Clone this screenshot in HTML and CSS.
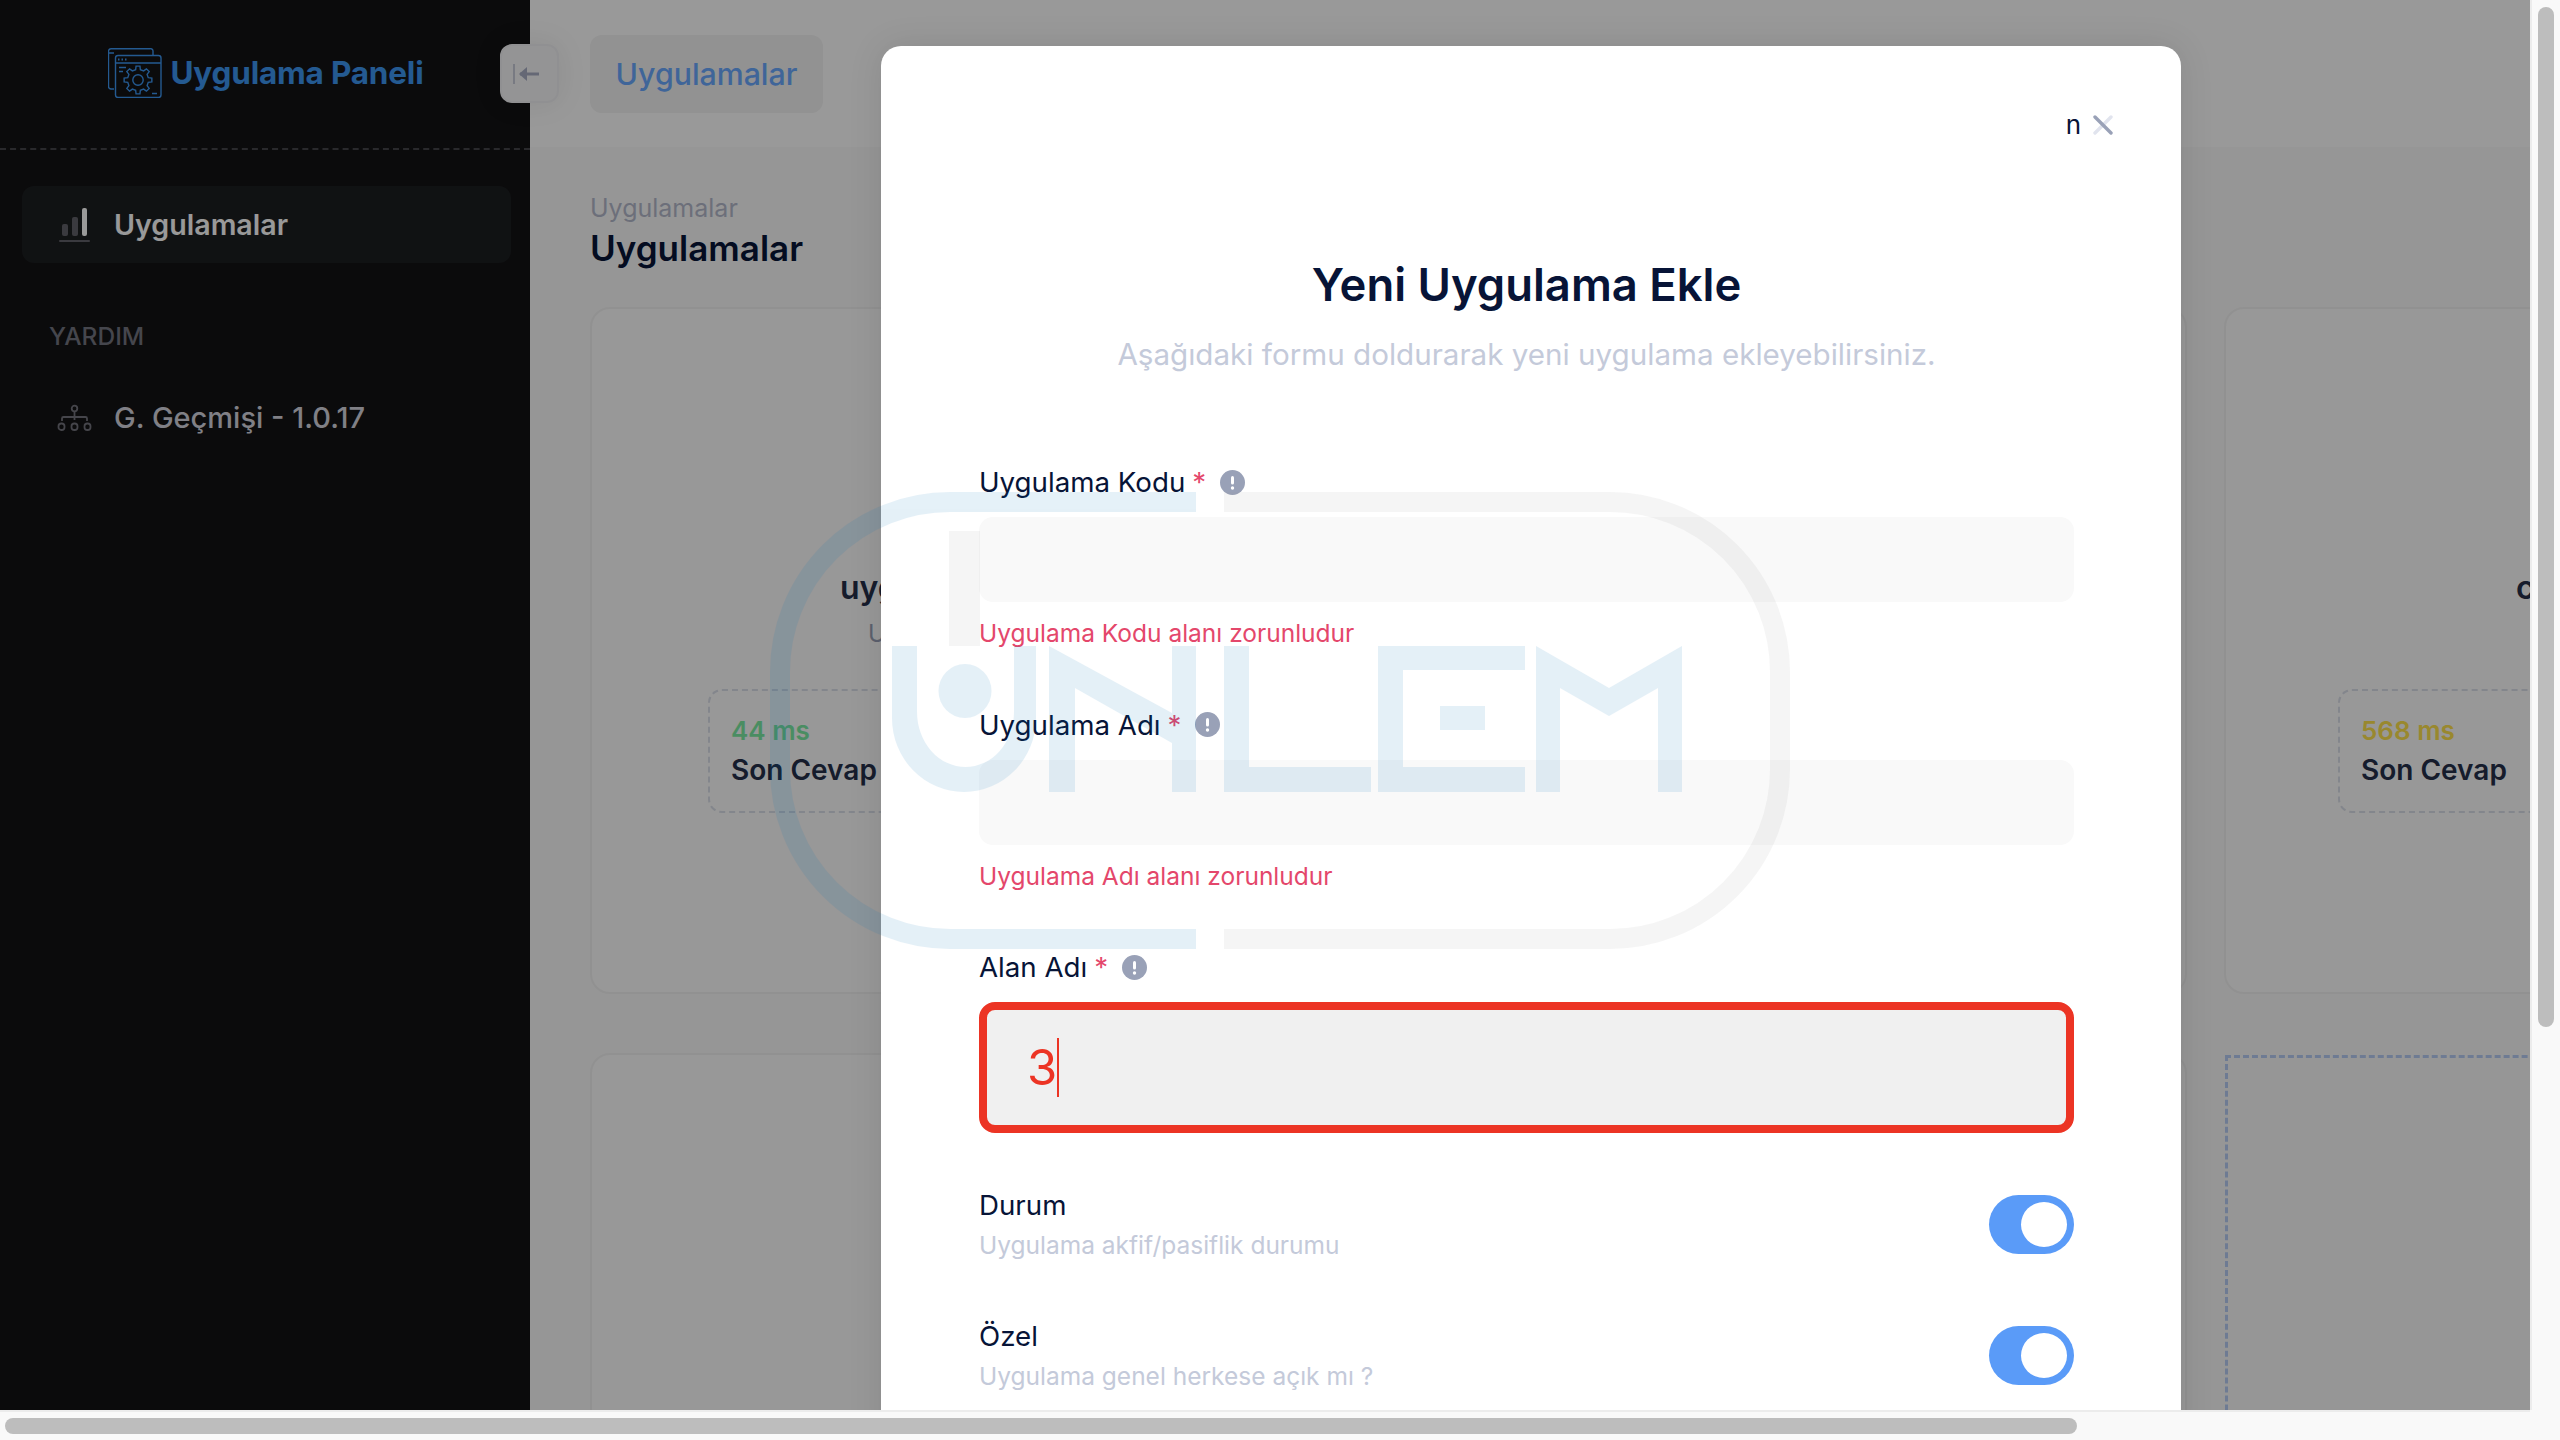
FILE: index.html
```html
<!DOCTYPE html>
<html lang="tr">
<head>
<meta charset="utf-8">
<title>Uygulama Paneli</title>
<link rel="stylesheet" href="styles.css">
</head>
<body>
<div class="viewport">
  <div class="page">
    <aside class="sidebar">
      <div class="side-head">
        <svg class="logo-icon" viewBox="0 0 54 50" fill="none" stroke="currentColor" stroke-width="1.4">
          <path d="M6 41H3a2.5 2.5 0 0 1-2.5-2.5V3A2.5 2.5 0 0 1 3 .7h39A2.5 2.5 0 0 1 45 3v4"/>
          <rect x="7.5" y="7.5" width="45.5" height="42" rx="2.5"/>
          <path d="M1 5h5M8 15h45M11 19.500h7M11 23.500h4M44 45.500h5"/>
          <path d="M10 11.500h1.500M13.500 11.500h1.500M17 11.500h1.500" stroke-width="2"/>
          <g transform="translate(30 32)">
            <polygon points="10.23,-2.36 13.86,-1.95 13.86,1.95 10.23,2.36 9.12,5.56 11.18,8.42 8.42,11.18 5.56,9.12 2.36,10.23 1.95,13.86 -1.95,13.86 -2.36,10.23 -5.56,9.12 -8.42,11.18 -11.18,8.42 -9.12,5.56 -10.23,2.36 -13.86,1.95 -13.86,-1.95 -10.23,-2.36 -9.12,-5.56 -11.18,-8.42 -8.42,-11.18 -5.56,-9.12 -2.36,-10.23 -1.95,-13.86 1.95,-13.86 2.36,-10.23 5.56,-9.12 8.42,-11.18 11.18,-8.42 9.12,-5.56"/>
            <circle r="5.200"/>
          </g>
        </svg>
        <span class="logo-text">Uygulama Paneli</span>
      </div>
      <nav class="side-nav">
        <a class="nav-item active">
          <svg class="nav-icon" viewBox="0 0 35 34">
            <rect class="bar-dim" x="5" y="16" width="6" height="12" rx="2"/>
            <rect class="bar-dim" x="15" y="9" width="6" height="19" rx="2"/>
            <rect class="bar-bright" x="25" y="0" width="5" height="28" rx="2"/>
            <rect class="bar-dim" x="2" y="32" width="31" height="2" rx="1"/>
          </svg>
          <span>Uygulamalar</span>
        </a>
        <div class="nav-section">YARDIM</div>
        <a class="nav-item">
          <svg class="nav-icon" viewBox="0 0 35 26" fill="none" stroke="currentColor" stroke-width="1.800">
            <circle cx="17.500" cy="3.500" r="2.800"/>
            <path d="M17.500 6.500V15M5 16v-2.500a1.500 1.500 0 0 1 1.500-1.500h22a1.500 1.500 0 0 1 1.500 1.500V16"/>
            <rect x="1.500" y="18.500" width="6" height="6.500" rx="2.800"/>
            <rect x="14.500" y="18.500" width="6" height="6.500" rx="2.800"/>
            <rect x="27.500" y="18.500" width="6" height="6.500" rx="2.800"/>
          </svg>
          <span>G. Geçmişi - 1.0.17</span>
        </a>
      </nav>
    </aside>

    <main class="main">
      <header class="topbar">
        <div class="tab">Uygulamalar</div>
      </header>
      <section class="content">
        <div class="crumb">Uygulamalar</div>
        <h1 class="page-title">Uygulamalar</h1>
        <div class="cards">
          <article class="card">
            <div class="card-name name-a">uyg</div>
            <div class="card-sub sub-a">U</div>
            <div class="stat stat-a">
              <div class="stat-value good">44 ms</div>
              <div class="stat-label">Son Cevap</div>
            </div>
          </article>
          <article class="card"></article>
          <article class="card">
            <div class="card-name name-c">c</div>
            <div class="stat stat-c">
              <div class="stat-value warn">568 ms</div>
              <div class="stat-label">Son Cevap</div>
            </div>
          </article>
          <article class="card"></article>
          <article class="card"></article>
          <article class="card card-new"></article>
        </div>
      </section>
    </main>

    <button class="collapse">
      <svg viewBox="0 0 26 22" width="26" height="22" fill="none" stroke="currentColor">
        <path d="M1 1v20" stroke-width="2" opacity=".6"/>
        <path d="M7 11h19" stroke-width="3"/>
        <path d="M14 4l-8 7 8 7z" fill="currentColor" stroke="none"/>
      </svg>
    </button>

    <div class="overlay"></div>

    <div class="modal">
      <div class="modal-close">
        <span>n</span>
        <svg viewBox="0 0 20 20" width="20" height="20" stroke-width="3.400" stroke-linecap="round">
          <path class="x-light" d="M18 2L2 18"/>
          <path class="x-dark" d="M2 2l16 16"/>
        </svg>
      </div>
      <h2 class="modal-title">Yeni Uygulama Ekle</h2>
      <p class="modal-sub">Aşağıdaki formu doldurarak yeni uygulama ekleyebilirsiniz.</p>

      <div class="field">
        <label class="label">Uygulama Kodu <em>*</em>
          <svg class="info" viewBox="0 0 25 25"><circle cx="12.500" cy="12.500" r="12.500"/><rect x="11" y="6" width="3" height="8.500" rx="1.500"/><circle cx="12.500" cy="18" r="1.700"/></svg>
        </label>
        <div class="input"></div>
        <div class="error">Uygulama Kodu alanı zorunludur</div>
      </div>

      <div class="field">
        <label class="label">Uygulama Adı <em>*</em>
          <svg class="info" viewBox="0 0 25 25"><circle cx="12.500" cy="12.500" r="12.500"/><rect x="11" y="6" width="3" height="8.500" rx="1.500"/><circle cx="12.500" cy="18" r="1.700"/></svg>
        </label>
        <div class="input"></div>
        <div class="error">Uygulama Adı alanı zorunludur</div>
      </div>

      <div class="field field-focus">
        <label class="label">Alan Adı <em>*</em>
          <svg class="info" viewBox="0 0 25 25"><circle cx="12.500" cy="12.500" r="12.500"/><rect x="11" y="6" width="3" height="8.500" rx="1.500"/><circle cx="12.500" cy="18" r="1.700"/></svg>
        </label>
        <div class="input input-focus"><span>3</span><i class="caret"></i></div>
      </div>

      <div class="switch-row">
        <div>
          <div class="label">Durum</div>
          <div class="hint">Uygulama akfif/pasiflik durumu</div>
        </div>
        <div class="switch"><i></i></div>
      </div>
      <div class="switch-row">
        <div>
          <div class="label">Özel</div>
          <div class="hint">Uygulama genel herkese açık mı ?</div>
        </div>
        <div class="switch"><i></i></div>
      </div>
    </div>

    <svg class="watermark" viewBox="0 0 1020 458" width="1020" height="458" role="img" aria-label="logo">
      <g class="wm-grey">
        <path class="wm-ring" d="M454 10H840A170 170 0 0 1 1010 180V277A170 170 0 0 1 840 447H454"/>
        <rect x="179" y="39" width="31" height="115"/>
      </g>
      <g class="wm-blue">
        <path class="wm-ring" d="M426 10H180A170 170 0 0 0 10 180V277A170 170 0 0 0 180 447H426"/>
        <ellipse cx="195" cy="199" rx="26.500" ry="27"/>
        <path d="M122 154H147V220A48.500 55 0 0 0 244 220V154H266V226A72 74 0 0 1 122 226Z"/>
        <polygon points="279,154 402,221 402,154 426,154 426,300 402,300 402,251 305,196 305,300 279,300"/>
        <polygon points="454,154 479,154 479,275 601,275 601,300 454,300"/>
        <polygon points="608,154 755,154 755,178 633,178 633,275 755,275 755,300 608,300"/>
        <rect x="670" y="214" width="45" height="24"/>
        <polygon points="766,154 839,196 912,154 912,300 888,300 888,196 839,224 790,196 790,300 766,300"/>
      </g>
    </svg>
  </div>

  <div class="vbar"><div class="vthumb"></div></div>
  <div class="hbar"><div class="hthumb"></div></div>
  <div class="corner"></div>
</div>
</body>
</html>
```

FILE: styles.css
```css
* { box-sizing: border-box; }
html, body { margin: 0; padding: 0; }
body {
  font-family: Inter, "Noto Sans", sans-serif;
  color: #071437;
  background: #fff;
}

.viewport {
  width: 2560px;
  height: 1440px;
  display: grid;
  grid-template-columns: 2530px 30px;
  grid-template-rows: 1410px 30px;
  overflow: hidden;
}

/* page */
.page {
  position: relative;
  overflow: hidden;
  display: flex;
  background: #fbfbfb;
}

.sidebar {
  width: 530px;
  flex: none;
  background: #131314;
  color: #fff;
}
.side-head {
  height: 150px;
  padding: 0 0 3px 2px;
  border-bottom: 2px dashed #45454a;
  display: flex;
  align-items: center;
  justify-content: center;
  gap: 8px;
}
.logo-icon { width: 54px; height: 50px; color: #3c96f2; flex: none; }
.logo-text { font-size: 31.500px; font-weight: 700; color: #3c96f2; line-height: 40px; letter-spacing: -0.2px; }

.side-nav { padding: 36px 19px 0 22px; display: flex; flex-direction: column; }
.nav-item {
  height: 77px;
  display: flex;
  align-items: center;
  gap: 22px;
  padding-left: 35px;
  font-size: 29px;
  font-weight: 500;
  color: #d5d5df;
  border-radius: 12px;
}
.nav-item.active { background: #1c1e21; color: #fff; font-weight: 600; font-size: 28.600px; }
.nav-item:last-child { margin-top: 1px; }
.nav-icon { width: 35px; height: 34px; flex: none; color: #74747d; }
.bar-dim { fill: #62626a; }
.bar-bright { fill: #fff; }
.nav-section {
  margin: 54px 0 23px 27px;
  font-size: 24.500px;
  font-weight: 500;
  line-height: 38px;
  color: #737580;
}

.main { flex: 1; min-width: 0; }
.topbar {
  height: 147px;
  padding: 35px 0 0 60px;
  background: #ffffff;
}
.tab {
  width: 233px;
  height: 78px;
  border-radius: 12px;
  background: #f3f3f3;
  color: #6aa9ff;
  font-size: 30.300px;
  font-weight: 500;
  line-height: 78px;
  text-align: center;
}
.content { padding: 42px 0 0 60px; }
.crumb { font-size: 25px; line-height: 38px; color: #b5b9cc; }
.page-title { margin: 0; font-size: 35px; font-weight: 600; line-height: 42px; color: #071437; }
.cards {
  margin-top: 38px;
  display: grid;
  grid-template-columns: repeat(3, 780px);
  column-gap: 37px;
  row-gap: 59px;
  width: 2500px;
}
.card {
  height: 687px;
  border: 2px solid #f2f2f2;
  border-radius: 20px;
  background: #fdfdfd;
  position: relative;
  padding-top: 259px;
}
.card-new {
  margin: 2px 0 0 1px;
  border: 3px dashed #b8cef5;
  border-radius: 0;
  background: transparent;
}
.card-name { font-size: 32px; font-weight: 600; line-height: 40px; color: #252f4a; }
.card-sub { font-size: 24px; line-height: 34px; color: #99a1b7; margin-top: 9px; }
.name-a { padding-left: 248px; }
.sub-a { padding-left: 276px; }
.name-c { padding-left: 290px; }
.stat {
  width: 420px;
  height: 124px;
  border: 2px dashed #dbdfe9;
  border-radius: 14px;
  padding: 21px 21px 0;
  position: absolute;
  top: 380px;
}
.stat-a { left: 116px; }
.stat-c { left: 112px; }
.stat-value { font-size: 26px; font-weight: 600; line-height: 38px; }
.good { color: #7ceca4; }
.warn { color: #ffe34d; }
.stat-label { font-size: 28px; font-weight: 600; line-height: 40px; color: #252f4a; }

.collapse {
  position: absolute;
  left: 500px;
  top: 44px;
  width: 59px;
  height: 59px;
  padding: 0 7px 0 0;
  display: flex;
  align-items: center;
  justify-content: center;
  border: 2px solid #f1f1f3;
  border-radius: 12px;
  background: #f7f7f8;
  color: #a8aec4;
  box-shadow: 0 0 30px rgba(0, 0, 0, .08);
}

.overlay {
  position: absolute;
  inset: 0;
  background: rgba(0, 0, 0, .4);
}

/* modal */
.modal {
  position: absolute;
  left: 881px;
  top: 46px;
  width: 1300px;
  padding: 59px 107px 60px 98px;
  background: #fff;
  border-radius: 20px;
  box-shadow: 0 0 34px rgba(0, 0, 0, .1);
}
.modal-close {
  height: 40px;
  margin-right: -39px;
  display: flex;
  align-items: center;
  justify-content: flex-end;
  gap: 12px;
  font-size: 26px;
  line-height: 40px;
}
.x-light { stroke: #e1e4ee; }
.x-dark { stroke: #99a1b7; }
.modal-title {
  margin: 112px 0 0;
  text-align: center;
  font-size: 45.400px;
  font-weight: 600;
  line-height: 56px;
}
.modal-sub {
  margin: 21px 0 88px;
  text-align: center;
  font-size: 29.600px;
  line-height: 40px;
  color: #c4cada;
}
.field { margin-top: 54.500px; }
.modal-sub + .field { margin-top: 0; }
.label {
  display: flex;
  align-items: center;
  gap: 7px;
  font-size: 27.700px;
  line-height: 40px;
}
.label em { font-style: normal; color: #e4476b; }
.info { width: 25px; height: 25px; margin-left: 7px; }
.info circle:first-child { fill: #99a1b7; }
.info rect, .info circle + rect + circle { fill: #fff; }
.input {
  margin-top: 15px;
  height: 85px;
  border-radius: 14px;
  background: #f9f9f9;
}
.input-focus {
  height: 131px;
  border: 8px solid #ec3424;
  border-radius: 16px;
  background: #f0f0f0;
  padding-left: 40px;
  display: flex;
  align-items: center;
  font-size: 49px;
  color: #ec3424;
}
.caret { width: 2px; height: 59px; background: #ec3424; margin-left: 0; }
.error {
  margin-top: 14px;
  font-size: 24.500px;
  line-height: 34px;
  color: #e4476b;
}
.switch-row {
  margin-top: 54px;
  display: flex;
  justify-content: space-between;
  align-items: flex-start;
}
.field-focus + .switch-row { margin-top: 52px; }
.hint { margin-top: 3px; font-size: 24.500px; line-height: 34px; color: #c4cada; }
.switch {
  width: 85px;
  height: 59px;
  margin-top: 10px;
  border-radius: 30px;
  background: #5a9bf8;
  display: flex;
  align-items: center;
  justify-content: flex-end;
  padding-right: 7px;
}
.switch i { width: 46px; height: 45px; border-radius: 50%; background: #fff; }

/* watermark */
.watermark {
  position: absolute;
  left: 770px;
  top: 492px;
  pointer-events: none;
}
.wm-blue { fill: #0073b9; stroke: none; opacity: .1; }
.wm-grey { fill: #9b9b9b; opacity: .1; }
.wm-ring { fill: none; stroke-width: 20; }
.wm-blue .wm-ring { stroke: #0073b9; }
.wm-grey .wm-ring { stroke: #9b9b9b; }

/* scrollbars */
.vbar {
  background: #f9f9f9;
  border-left: 2px solid #ececec;
  padding: 7px 6px 0 6px;
}
.vthumb { height: 1020px; border-radius: 8px; background: #bdbdbd; }
.hbar {
  background: #f9f9f9;
  border-top: 2px solid #ececec;
  padding: 6px 0 0 5px;
}
.hthumb { width: 2072px; height: 16px; border-radius: 8px; background: #bdbdbd; }
.corner { background: #f9f9f9; }
```
